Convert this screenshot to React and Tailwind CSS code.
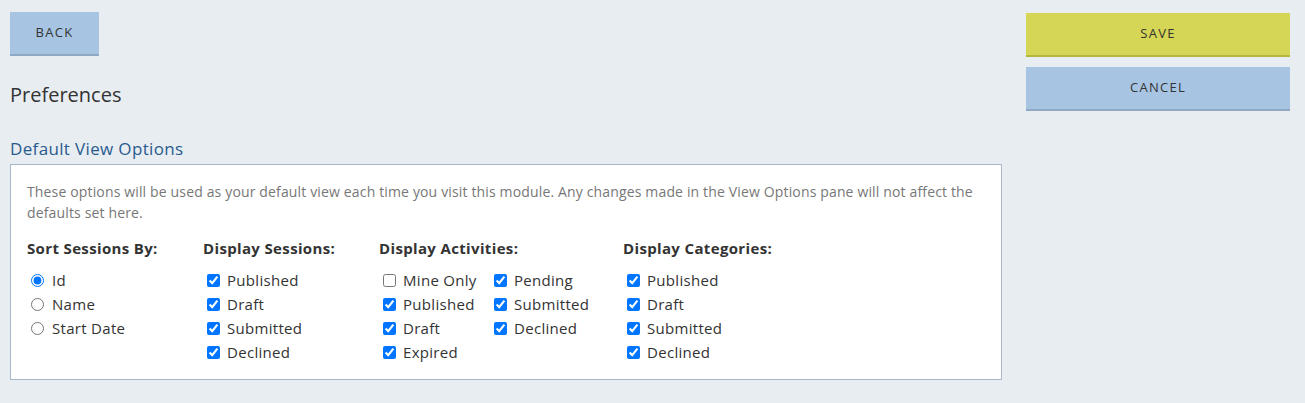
const sortOptions = [
  { label: "Id", checked: true },
  { label: "Name", checked: false },
  { label: "Start Date", checked: false },
];

const sessions = ["Published", "Draft", "Submitted", "Declined"];
const activitiesLeft = [
  { label: "Mine Only", checked: false },
  { label: "Published", checked: true },
  { label: "Draft", checked: true },
  { label: "Expired", checked: true },
];
const activitiesRight = ["Pending", "Submitted", "Declined"];
const categories = ["Published", "Draft", "Submitted", "Declined"];

function Check({ label, checked = true }) {
  return (
    <label className="flex items-center h-6 gap-[7px] text-[15px] leading-6 tracking-[0.3px] text-[#333]">
      <input type="checkbox" defaultChecked={checked} className="w-[13px] h-[13px] m-0 ml-[4px]" />
      {label}
    </label>
  );
}

function Radio({ label, checked }) {
  return (
    <label className="flex items-center h-6 gap-[8px] text-[15px] leading-6 tracking-[0.3px] text-[#333]">
      <input type="radio" name="sort" defaultChecked={checked} className="w-[13px] h-[13px] m-0 ml-[4px]" />
      {label}
    </label>
  );
}

function ColumnTitle({ children }) {
  return <h3 className="text-[15px] font-bold text-[#333] leading-[22px] tracking-[0.35px]">{children}</h3>;
}

export default function App() {
  return (
    <div className="w-[1305px] h-[403px] bg-[#e8edf2] font-['Open_Sans',sans-serif] flex">
      {/* Left column */}
      <div className="w-[992px] ml-[10px] flex flex-col">
        <div className="mt-[12px]">
          <button className="w-[89px] h-[44px] bg-[#a7c5e3] border-b-2 border-[#8fa9c4] text-[13px] tracking-[0.1em] text-[#333]">
            BACK
          </button>
        </div>
        <h1 className="mt-[26px] text-[20px] text-[#333] leading-[26px]">Preferences</h1>
        <h2 className="mt-[30px] text-[17px] text-[#285b8d] leading-[22px] tracking-[0.35px]">Default View Options</h2>
        <div className="mt-[4px] h-[216px] bg-white border border-[#a9b8c8] px-[16px] pt-[16px]">
          <p className="text-[14px] leading-[21px] tracking-[0.15px] text-[#777]">
            These options will be used as your default view each time you visit this module. Any changes made in the View Options pane will not affect the defaults set here.
          </p>
          <div className="flex mt-[14px]">
            <div className="w-[176px]">
              <ColumnTitle>Sort Sessions By:</ColumnTitle>
              <div className="mt-[9px]">
                {sortOptions.map((o) => (
                  <Radio key={o.label} {...o} />
                ))}
              </div>
            </div>
            <div className="w-[176px]">
              <ColumnTitle>Display Sessions:</ColumnTitle>
              <div className="mt-[9px]">
                {sessions.map((s) => (
                  <Check key={s} label={s} />
                ))}
              </div>
            </div>
            <div className="w-[244px]">
              <ColumnTitle>Display Activities:</ColumnTitle>
              <div className="mt-[9px] flex">
                <div className="w-[111px]">
                  {activitiesLeft.map((a) => (
                    <Check key={a.label} {...a} />
                  ))}
                </div>
                <div>
                  {activitiesRight.map((a) => (
                    <Check key={a} label={a} />
                  ))}
                </div>
              </div>
            </div>
            <div>
              <ColumnTitle>Display Categories:</ColumnTitle>
              <div className="mt-[9px]">
                {categories.map((c) => (
                  <Check key={c} label={c} />
                ))}
              </div>
            </div>
          </div>
        </div>
      </div>

      {/* Right column */}
      <div className="ml-[24px] w-[264px] mt-[13px] flex flex-col gap-[10px]">
        <button className="h-[44px] bg-[#d5d655] border-b-2 border-[#b5b63e] text-[13px] tracking-[0.1em] text-[#333]">
          SAVE
        </button>
        <button className="h-[44px] bg-[#a7c5e3] border-b-2 border-[#8fa9c4] text-[13px] tracking-[0.1em] text-[#333]">
          CANCEL
        </button>
      </div>
    </div>
  );
}
